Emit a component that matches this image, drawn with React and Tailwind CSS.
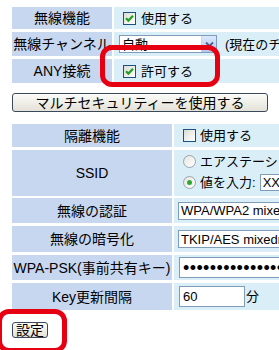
import React from "react";

const font = { fontFamily: '"Liberation Sans", "Noto Sans CJK JP", sans-serif' };

function Check({ checked }) {
  return (
    <span className="relative inline-flex h-[13px] w-[13px] shrink-0 items-center justify-center border border-[#1c5180] bg-gradient-to-br from-[#dcdcd6] to-white">
      {checked && (
        <svg width="9" height="9" viewBox="0 0 9 9">
          <path d="M1 4.2 L3.4 6.6 L8 1.8" fill="none" stroke="#21a121" strokeWidth="2.2" />
        </svg>
      )}
    </span>
  );
}

function Radio({ checked }) {
  return (
    <span className="inline-flex h-[13px] w-[13px] shrink-0 items-center justify-center rounded-full border border-[#9aa4ae] bg-gradient-to-br from-[#e6e6e0] to-white">
      {checked && <span className="h-[5px] w-[5px] rounded-full bg-[#2fa82f]" />}
    </span>
  );
}

function Select({ text, width }) {
  return (
    <div
      className="flex h-[18px] shrink-0 items-center border border-[#7f9db9] bg-white"
      style={{ width }}
    >
      <span className="flex-1 truncate pl-[2px] text-[13px] leading-none text-black">{text}</span>
      <span className="flex h-full w-[15px] items-center justify-center bg-gradient-to-b from-[#dce8fc] to-[#b4c9f0] border-l border-[#c3d3fd]">
        <svg width="9" height="7" viewBox="0 0 9 7">
          <path d="M1 1.5 L4.5 5 L8 1.5" fill="none" stroke="#4d6185" strokeWidth="1.8" />
        </svg>
      </span>
    </div>
  );
}

const Lbl1 = ({ children }) => (
  <div className="flex w-[100px] shrink-0 items-center justify-center whitespace-nowrap bg-[#c8d7f0] text-[14px] leading-none text-black">
    {children}
  </div>
);
const Lbl2 = ({ children }) => (
  <div className="flex w-[160px] shrink-0 items-center justify-center whitespace-nowrap bg-[#c8d7f0] text-[14px] leading-none text-black">
    {children}
  </div>
);

export default function App() {
  return (
    <div className="relative h-[350px] w-[279px] overflow-hidden bg-white" style={font}>
      <div className="w-[420px] pl-[12px] pt-[7px]">
        {/* table 1 */}
        <div className="flex flex-col gap-[3px]">
          <div className="flex h-[22px] gap-[2px]">
            <Lbl1>無線機能</Lbl1>
            <div className="flex flex-1 items-center gap-[5px] bg-[#daeef8] pl-[9px] text-[13px] leading-none">
              <Check checked />
              <span>使用する</span>
            </div>
          </div>
          <div className="flex h-[24px] gap-[2px]">
            <Lbl1>無線チャンネル</Lbl1>
            <div className="flex flex-1 items-center gap-[8px] bg-[#daeef8] pl-[5px] text-[13px] leading-none">
              <Select text="自動" width={98} />
              <span className="whitespace-nowrap">(現在のチャンネル: 11)</span>
            </div>
          </div>
          <div className="flex h-[24px] gap-[2px]">
            <Lbl1>ANY接続</Lbl1>
            <div className="flex flex-1 items-center gap-[5px] bg-[#daeef8] pl-[9px] text-[13px] leading-none">
              <Check checked />
              <span>許可する</span>
            </div>
          </div>
        </div>

        {/* multi security button */}
        <div className="mt-[10px] flex h-[19px] w-[256px] items-center justify-center rounded-[3px] border border-[#3b4a5a] bg-gradient-to-b from-[#fbfbf8] to-[#e4e2d8] text-[14px] leading-none text-black">
          マルチセキュリティーを使用する
        </div>

        {/* table 2 */}
        <div className="mt-[12px] flex flex-col">
          <div className="flex h-[23px] gap-[2px]">
            <Lbl2>隔離機能</Lbl2>
            <div className="flex flex-1 items-center gap-[4px] bg-[#daeef8] pl-[9px] text-[13px] leading-none">
              <Check />
              <span>使用する</span>
            </div>
          </div>
          <div className="mt-[3px] flex h-[46px] gap-[2px]">
            <Lbl2>SSID</Lbl2>
            <div className="flex flex-1 flex-col justify-center gap-[6px] bg-[#daeef8] pl-[9px] text-[13px] leading-none">
              <div className="flex items-center gap-[4px] whitespace-nowrap">
                <Radio />
                <span>エアステーションのMACアドレスを使用</span>
              </div>
              <div className="flex items-center gap-[4px] whitespace-nowrap">
                <Radio checked />
                <span>値を入力:</span>
                <div className="flex h-[17px] w-[120px] items-center border border-[#7f9db9] bg-white pl-[2px] text-[13px]">
                  XXXXXXXX
                </div>
              </div>
            </div>
          </div>
          <div className="mt-[2px] flex h-[25px] gap-[2px]">
            <Lbl2>無線の認証</Lbl2>
            <div className="flex flex-1 items-center bg-[#daeef8] pl-[4px]">
              <Select text="WPA/WPA2 mixedmode - PSK" width={200} />
            </div>
          </div>
          <div className="mt-[3px] flex h-[26px] gap-[2px]">
            <Lbl2>無線の暗号化</Lbl2>
            <div className="flex flex-1 items-center bg-[#daeef8] pl-[4px]">
              <Select text="TKIP/AES mixedmode" width={200} />
            </div>
          </div>
          <div className="mt-[3px] flex h-[25px] gap-[2px]">
            <Lbl2>WPA-PSK(事前共有キー)</Lbl2>
            <div className="flex flex-1 items-center bg-[#daeef8] pl-[5px]">
              <div className="flex h-[21px] w-[200px] items-center overflow-hidden border border-[#7f9db9] bg-white pl-[3px] text-[18px] leading-none tracking-[0.4px] text-black">
                •••••••••••••••••••
              </div>
            </div>
          </div>
          <div className="mt-[3px] flex h-[27px] gap-[2px]">
            <Lbl2>Key更新間隔</Lbl2>
            <div className="flex flex-1 items-center gap-[1px] bg-[#daeef8] pl-[5px] text-[13px] leading-none">
              <div className="flex h-[21px] w-[66px] items-center border border-[#7f9db9] bg-white pl-[3px] text-[13px]">
                60
              </div>
              <span>分</span>
            </div>
          </div>
        </div>

        {/* submit button */}
        <div className="mt-[12px] flex h-[16px] w-[36px] items-center justify-center rounded-[3px] border border-[#3b4a5a] bg-gradient-to-b from-[#fbfbf8] to-[#e4e2d8] text-[14px] leading-none text-black">
          設定
        </div>
      </div>

      {/* red highlight overlays */}
      <div className="pointer-events-none absolute left-[100px] top-[45px] h-[42px] w-[120px] rounded-[12px] border-[5px] border-[#e60012]" />
      <div className="pointer-events-none absolute left-[-3px] top-[309px] h-[44px] w-[70px] rounded-[12px] border-[5px] border-[#e60012]" />
    </div>
  );
}
